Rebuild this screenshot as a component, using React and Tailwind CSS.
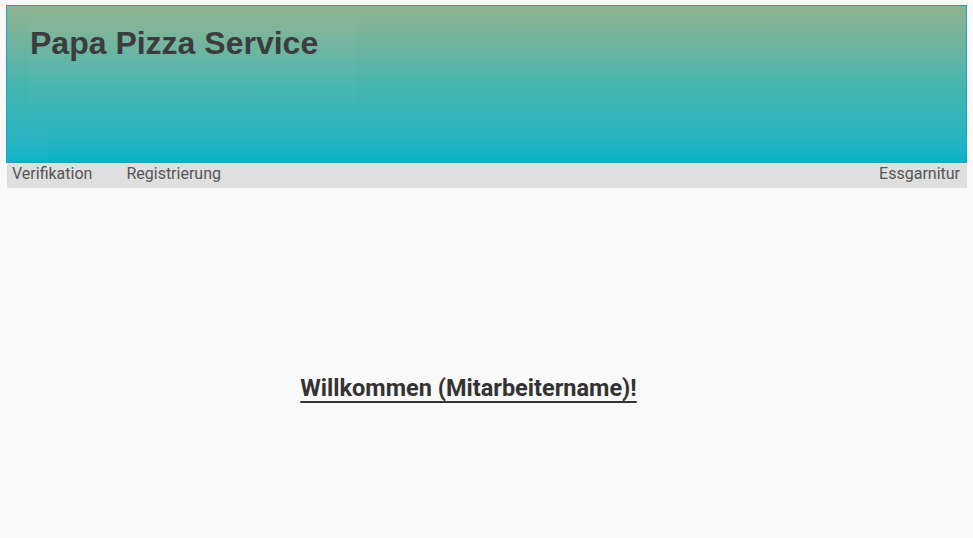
import React from 'react';

const navLinks = ['Verifikation', 'Registrierung'];

const App = () => {
	return (
		<div className="min-h-[538px] bg-[#f9f9f9] pt-[5px] px-[6px] font-['Roboto',sans-serif]">
			<header className="h-[158px] border border-[#1ba0d0] bg-gradient-to-b from-[#8db38f] via-[#45b5ae] to-[#05b3c8] flex flex-col">
				<div className="ml-[23px] mt-[14px] w-[328px] h-[83px] bg-white/[0.025]">
					<h1 className="font-['Liberation_Sans',Arial,sans-serif] font-bold text-[32px] leading-[36px] text-[#3c3c3c] pt-[5px]">
						Papa Pizza Service
					</h1>
				</div>
				<div className="mt-auto w-[42px] h-[31px] bg-white/[0.025]"></div>
			</header>
			<nav className="ml-px h-[25px] bg-[#dfdfdf] flex items-start justify-between pt-px pl-[5px] pr-[7px] text-[16px] leading-[20px] text-[#555555]">
				<div className="flex gap-[34px]">
					{navLinks.map((link) => (
						<a key={link} href="#">
							{link}
						</a>
					))}
				</div>
				<a href="#">Essgarnitur</a>
			</nav>
			<main className="flex justify-center pt-[183px] pr-[36px]">
				<h2 className="text-[23.5px] font-bold text-[#333333] underline underline-offset-[5px] decoration-2 [text-decoration-skip-ink:none]">
					Willkommen (Mitarbeitername)!
				</h2>
			</main>
		</div>
	);
};

export default App;
